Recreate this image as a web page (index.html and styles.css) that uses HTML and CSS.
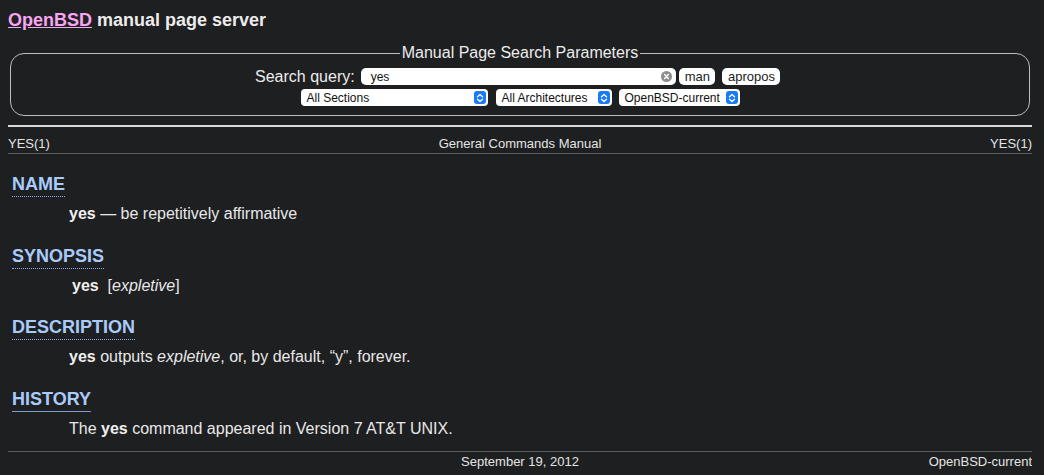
FILE: index.html
```html
<!DOCTYPE html>
<html lang="en">
<head>
<meta charset="utf-8">
<title>YES(1)</title>
<link rel="stylesheet" href="styles.css">
</head>
<body>
<h1 class="title"><a href="#" class="brand">OpenBSD</a> manual page server</h1>
<form class="search">
  <fieldset class="params">
    <legend class="params-legend">Manual Page Search Parameters</legend>
    <div class="row row-query">
      <label class="label">Search query:</label>
      <span class="query"><span class="query-text">yes</span><span class="clear"><svg width="11" height="11" viewBox="0 0 11 11"><circle cx="5.5" cy="5.5" r="5.5" fill="#8e8e8e"/><path d="M3.6 3.6 L7.4 7.4 M7.4 3.6 L3.6 7.4" stroke="#fff" stroke-width="1.4" stroke-linecap="round"/></svg></span></span>
      <span class="btn btn-man">man</span>
      <span class="btn">apropos</span>
    </div>
    <div class="row">
      <span class="select sel-sec"><span>All Sections</span><span class="chev"><svg width="8" height="10" viewBox="0 0 8 10"><path d="M1.5 3.8 L4 1.5 L6.5 3.8 M1.5 6.2 L4 8.5 L6.5 6.2" fill="none" stroke="#fff" stroke-width="1.3" stroke-linecap="round" stroke-linejoin="round"/></svg></span></span>
      <span class="select sel-arch"><span>All Architectures</span><span class="chev"><svg width="8" height="10" viewBox="0 0 8 10"><path d="M1.5 3.8 L4 1.5 L6.5 3.8 M1.5 6.2 L4 8.5 L6.5 6.2" fill="none" stroke="#fff" stroke-width="1.3" stroke-linecap="round" stroke-linejoin="round"/></svg></span></span>
      <span class="select sel-os"><span>OpenBSD-current</span><span class="chev"><svg width="8" height="10" viewBox="0 0 8 10"><path d="M1.5 3.8 L4 1.5 L6.5 3.8 M1.5 6.2 L4 8.5 L6.5 6.2" fill="none" stroke="#fff" stroke-width="1.3" stroke-linecap="round" stroke-linejoin="round"/></svg></span></span>
    </div>
  </fieldset>
</form>
<hr class="rule">
<div class="head">
  <span class="head-l">YES(1)</span>
  <span class="head-c">General Commands Manual</span>
  <span class="head-r">YES(1)</span>
</div>
<main class="manual">
  <section class="sec">
    <h2 class="sh"><a href="#" class="permalink">NAME</a></h2>
    <p class="body"><b>yes</b> — be repetitively affirmative</p>
  </section>
  <section class="sec">
    <h2 class="sh"><a href="#" class="permalink">SYNOPSIS</a></h2>
    <p class="body syn"><b>yes</b>&nbsp;&nbsp;[<i>expletive</i>]</p>
  </section>
  <section class="sec">
    <h2 class="sh"><a href="#" class="permalink">DESCRIPTION</a></h2>
    <p class="body"><b>yes</b> outputs <i>expletive</i>, or, by default, “y”, forever.</p>
  </section>
  <section class="sec">
    <h2 class="sh"><a href="#" class="permalink visited">HISTORY</a></h2>
    <p class="body">The <b>yes</b> command appeared in Version 7 AT&amp;T UNIX.</p>
  </section>
</main>
<div class="foot">
  <span></span>
  <span class="foot-date">September 19, 2012</span>
  <span class="foot-os">OpenBSD-current</span>
</div>
</body>
</html>
```
FILE: styles.css
```css
html { background: #1e1f21; }
body {
  margin: 8px 12px 8px 8px;
  background: #1e1f21;
  color: #e8e8e8;
  font-family: "Liberation Sans", Arial, sans-serif;
}
.title {
  margin: 0;
  font-size: 18px;
  line-height: 24px;
  font-weight: bold;
  color: #ececec;
}
.brand { color: #f6a6f2; text-decoration: underline; }
.search { margin: 12px 2px 0; }
.params {
  margin: 0;
  padding: 6px 10px 9px;
  border: 1px solid #bdbdbd;
  border-radius: 14px;
  text-align: center;
  min-width: 0;
}
.params-legend {
  padding: 0 2px;
  font-size: 16px;
  line-height: 18px;
  color: #ececec;
}
.row {
  display: flex;
  justify-content: center;
  align-items: center;
  gap: 7px;
  height: 17px;
}
.row-query { padding-right: 5px; }
.row + .row { margin-top: 4px; }
.label { font-size: 16px; color: #ececec; margin-right: -1px; }
.query {
  display: flex;
  align-items: center;
  justify-content: space-between;
  width: 315px;
  height: 17px;
  box-sizing: border-box;
  padding: 0 4px 0 10px;
  background: #fff;
  border-radius: 5px;
  color: #111;
  font-size: 12px;
  text-align: left;
}
.clear { display: flex; }
.btn {
  display: inline-flex;
  align-items: center;
  height: 17px;
  padding: 0 5px 0 6px;
  background: #fff;
  border-radius: 5px;
  color: #222;
  font-size: 13px;
}
.btn-man { margin-left: -4px; }
.select {
  display: flex;
  align-items: center;
  justify-content: space-between;
  height: 17px;
  box-sizing: border-box;
  padding: 0 2px 0 6px;
  background: #fff;
  border-radius: 4px;
  color: #111;
  font-size: 12px;
  text-align: left;
}
.sel-sec { width: 187px; }
.sel-arch { width: 116px; margin-left: 1px; }
.sel-os { width: 121px; }
.chev {
  display: flex;
  align-items: center;
  justify-content: center;
  width: 12px;
  height: 13px;
  border-radius: 3px;
  background: #1a7cf5;
}
.rule {
  margin: 9px 0 0;
  border: 0;
  height: 2px;
  background: #d8d8d8;
}
.head {
  display: grid;
  grid-template-columns: 1fr auto 1fr;
  margin-top: 9px;
  padding-bottom: 2px;
  border-bottom: 1px solid #5b5b5b;
  font-size: 13px;
  line-height: 15px;
  color: #e4e4e4;
}
.head-r { text-align: right; }
.manual { margin-top: 21px; }
.sec { margin: 0 0 23.5px; }
.sec:last-child { margin-bottom: 0; }
.sh {
  margin: 0 0 0 4px;
  font-size: 18px;
  line-height: 18px;
  font-weight: bold;
}
.permalink {
  color: #a9cbfa;
  text-decoration: none;
  border-bottom: 1px dotted #86aee8;
  padding-bottom: 2px;
}
.permalink.visited { border-bottom: 1px solid #7f9cc4; }
.body {
  margin: 12px 0 0 61px;
  font-size: 16px;
  line-height: 18px;
  color: #e8e8e8;
}
.body b { color: #f0f0f0; }
.syn { margin-left: 64px; }
.foot {
  display: grid;
  grid-template-columns: 1fr auto 1fr;
  margin-top: 13px;
  padding-top: 2px;
  border-top: 1px solid #5b5b5b;
  font-size: 13px;
  line-height: 15px;
  color: #e4e4e4;
}
.foot-os { text-align: right; }
```
